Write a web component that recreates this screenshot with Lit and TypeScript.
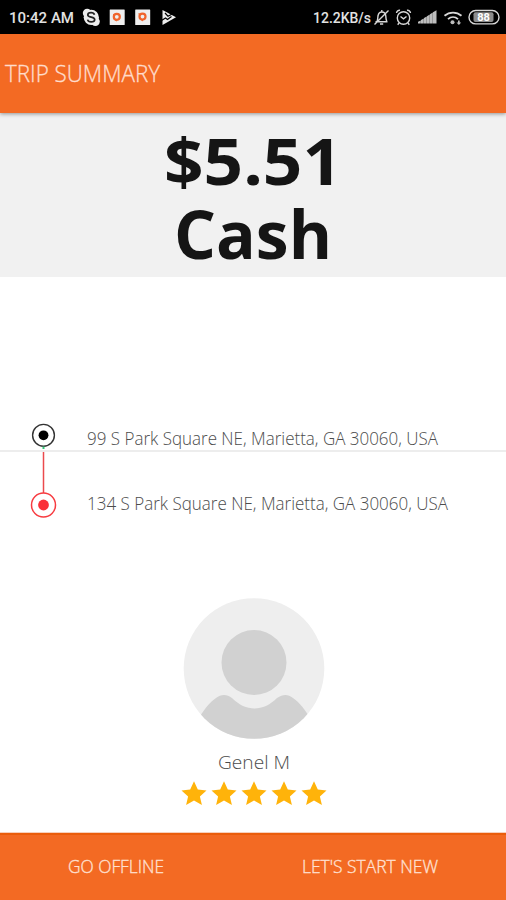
import { LitElement, html, svg, css } from "lit";
import { customElement, property } from "lit/decorators.js";

/** A single line of text set to an exact measure. */
@customElement("fit-text")
class FitText extends LitElement {
  @property() text = "";
  @property({ type: Number }) measure = 100;
  @property({ type: Number }) line = 24;
  @property({ type: Number }) baseline = 18;

  static styles = css`
    :host { display: block; flex: none; }
    svg { display: block; overflow: visible; }
    text { fill: currentColor; stroke: currentColor; stroke-width: var(--ink, 0); }
  `;

  render() {
    return html`<svg width=${this.measure} height=${this.line}>
      <text x="0" y=${this.baseline} textLength=${this.measure} lengthAdjust="spacingAndGlyphs">${this.text}</text>
    </svg>`;
  }
}

@customElement("status-bar")
class StatusBar extends LitElement {
  static styles = css`
    :host {
      display: flex; justify-content: space-between; height: 34px; box-sizing: border-box;
      padding: 0 5px 0 9px; background: #000; color: #e2e2e2;
      font: 500 15px Roboto, sans-serif;
    }
    .side { display: flex; }
    svg { display: block; }
  `;

  render() {
    return html`
      <div class="side">
        <fit-text text="10:42 AM" measure="65" line="34" baseline="23"></fit-text>
        <svg width="110" height="34" viewBox="74 0 110 34">
          <g fill="#eee">
            <circle cx="91.3" cy="17.3" r="7.6" /><circle cx="87.2" cy="13.1" r="4.4" /><circle cx="95.4" cy="21.6" r="4.4" />
            <rect x="109.7" y="9.5" width="15" height="15.5" rx=".5" /><rect x="135.2" y="9.5" width="15" height="15.5" rx=".5" />
            <path d="M162.5 10 176 17.2 162.5 25Z" />
          </g>
          <path d="M94.5 14.7c-.5-1.4-1.8-2-3.4-2-2 0-3.3.8-3.3 2.2 0 3 6.9 1.5 6.9 4.6 0 1.5-1.5 2.4-3.5 2.4s-3.3-.8-3.6-2.3" fill="none" stroke="#222" stroke-width="1.7" />
          <g fill="none" stroke="#f0642c" stroke-width="2.2">
            <circle cx="116.8" cy="16.8" r="3" /><circle cx="142.5" cy="16.6" r="3" />
          </g>
          <path d="M113.6 14v5l3 2M139 13l1 6 3 2" fill="none" stroke="#f0642c" stroke-width="1" />
          <path d="m165 13 3 3.2 6-3.2M161.5 20.5l4-2.5 2 1.5 4-3" fill="none" stroke="#000" stroke-width="1.2" />
        </svg>
      </div>
      <div class="side">
        <fit-text text="12.2KB/s" measure="58" line="34" baseline="23"></fit-text>
        <svg width="130" height="34" viewBox="371 0 130 34">
          <g fill="none" stroke="#d8d8d8" stroke-width="1.4">
            <path d="M375.5 21.8h12M377 21c1-1.5.6-3 1-5 .4-2.5 1.7-4 3.8-4s3.8 1.6 4 4c.2 2 0 3.5 1 5M380 24h3.2M381.8 12v-2M374.5 24.5 388.5 10.5" />
            <circle cx="403.5" cy="18" r="6.2" /><path d="m400.5 16.5 3 2.3 3-2.3M396.5 13c.2-1.8 1.8-3 3.5-2.7M410.5 13c-.2-1.8-1.8-3-3.5-2.7M399 23l-1.3 1.7M408 23l1.3 1.7" />
          </g>
          <g fill="#bdbdbd">
            <path d="M418 23.5v-1.7l2.8-1.3v3zM421 23.5v-3.4l2.8-1.6v5zM424 23.5V18l2.8-1.6v7.1zM427 23.5v-7.3l2.8-1.6v8.9zM430 23.5v-9.3l2.8-1.6v10.9zM433 23.5V12.3l3.5-2.1v13.3z" />
            <circle cx="452.5" cy="22.3" r="2" /><path d="M458 20.5h1.7v2h1.5L458.9 25l-2.4-2.5h1.5z" />
          </g>
          <g fill="none" stroke="#d8d8d8" stroke-width="1.8">
            <path d="M444.5 15.8c5-4.3 12-4.3 17 0M448 19.2c3-2.8 7-2.8 10 0" />
            <rect x="469" y="10.5" width="30" height="13.4" rx="6.7" stroke-width="1.4" />
          </g>
          <rect x="473.5" y="12.3" width="20" height="9.8" rx="2" fill="#8d8d8d" />
          <text x="477.3" y="21.2" font-size="11" font-weight="700" fill="#fff">88</text>
        </svg>
      </div>`;
  }
}

@customElement("app-root")
class AppRoot extends LitElement {
  static styles = css`
    :host {
      display: flex; flex-direction: column; width: 506px; height: 900px; overflow: hidden;
      background: #fff; color: #4c4c4c; font: 300 19px "Open Sans", "Noto Sans", sans-serif;
    }
    header {
      flex: none; height: 79px; box-sizing: border-box; padding-left: 5px; background: #f36a23;
      color: #ffdccb; font-size: 24.4px; z-index: 1; --ink: .35px;
      box-shadow: 0 1px 4px rgba(0, 0, 0, .4);
    }
    .fare {
      flex: none; height: 164px; display: flex; flex-direction: column; align-items: center;
      background: #f1f1f1; color: #151515; font-size: 65px; font-weight: 700;
    }
    .amount { font-size: 64px; }
    .cash { font-size: 66px; }
    .stop { display: flex; flex: none; }
    .pickup { height: 175px; padding-top: 143px; box-sizing: border-box; border-bottom: 2px solid #ededed; }
    .dropoff { height: 67px; }
    .pin { width: 87px; flex: none; display: block; }
    .rider { flex: 1; display: flex; flex-direction: column; align-items: center; padding: 78px 0 0 1px; }
    .rider svg { display: block; }
    .name { padding-left: 1px; }
    footer {
      flex: none; height: 68px; box-sizing: border-box; border-top: 1px solid #f7d0bd;
      box-shadow: inset 0 2px #ea5d0b; background: #f36a23; color: #ffe0d2; --ink: .35px;
      display: grid; grid-template-columns: 1fr 1fr;
    }
    .action {
      all: unset; display: flex; justify-content: center; font-weight: 300; cursor: pointer; --ink: .35px;
    }
    .action.first { padding-right: 21px; }
    .action.last { padding-right: 19px; }
  `;

  private star(i: number) {
    return svg`<path transform="translate(${i * 30} 0)" fill="#ffb30a"
      d="M13 .3l3.8 8.3 8.7.8-6.6 6 2 8.5L13 19.5l-7.9 4.4 2-8.5-6.6-6 8.7-.8z" />`;
  }

  render() {
    return html`
      <status-bar></status-bar>
      <header><fit-text text="TRIP SUMMARY" measure="155" line="79" baseline="47.5"></fit-text></header>
      <section class="fare">
        <fit-text class="amount" text="$5.51" measure="178" line="82" baseline="72"></fit-text>
        <fit-text class="cash" text="Cash" measure="158" line="82" baseline="63.5"></fit-text>
      </section>
      <div class="stop pickup">
        <svg class="pin" height="30" viewBox="0 420 87 30">
          <circle cx="43.5" cy="435.3" r="10.9" fill="none" stroke="#333" stroke-width="1.4" />
          <circle cx="43.5" cy="435.3" r="4.9" fill="#000" />
          <path d="M43.5 446.5v2.5" stroke="#35c779" stroke-width="2" />
        </svg>
        <fit-text text="99 S Park Square NE, Marietta, GA 30060, USA" measure="351" line="28" baseline="24.5"></fit-text>
      </div>
      <div class="stop dropoff">
        <svg class="pin" height="67" viewBox="0 452 87 67">
          <path d="M43.5 452v41" stroke="#eb4a4d" stroke-width="1.5" />
          <circle cx="43.5" cy="505" r="12" fill="none" stroke="#f73b40" stroke-width="1.5" />
          <circle cx="43.5" cy="505" r="5.4" fill="#fa3038" />
        </svg>
        <fit-text text="134 S Park Square NE, Marietta, GA 30060, USA" measure="361" line="67" baseline="57.8"></fit-text>
      </div>
      <section class="rider">
        <svg width="142" height="142" viewBox="0 0 142 142">
          <defs><clipPath id="disc"><circle cx="71" cy="71.5" r="70.3" /></clipPath></defs>
          <circle cx="71" cy="71.5" r="70.3" fill="#eee" />
          <circle cx="71" cy="65.5" r="32.5" fill="#d1d1d1" />
          <path clip-path="url(#disc)" fill="#d1d1d1"
            d="M14 125C20 113 27 105 33 101c5-4 11-4 16 0 14 14 31 14 45 0 6-4 11-4 16 0 6 4 13 12 19 24v17H14z" />
        </svg>
        <fit-text class="name" text="Genel M" measure="72" line="42" baseline="29.5"></fit-text>
        <svg width="146" height="24" viewBox="0 0 146 24">${[0, 1, 2, 3, 4].map((i) => this.star(i))}</svg>
      </section>
      <footer>
        <button class="action first"><fit-text text="GO OFFLINE" measure="96" line="67" baseline="40"></fit-text></button>
        <button class="action last"><fit-text text="LET'S START NEW" measure="136" line="67" baseline="40"></fit-text></button>
      </footer>`;
  }
}
